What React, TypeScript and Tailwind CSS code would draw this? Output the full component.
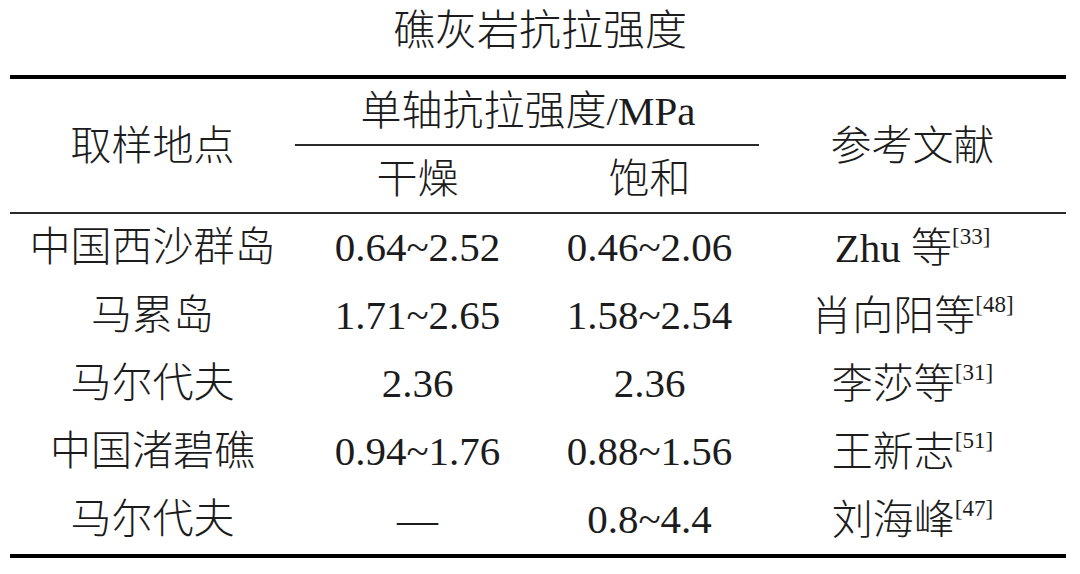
const rows = [
  { place: '中国西沙群岛', dry: '0.64~2.52', wet: '0.46~2.06', ref: 'Zhu 等', cite: '[33]' },
  { place: '马累岛', dry: '1.71~2.65', wet: '1.58~2.54', ref: '肖向阳等', cite: '[48]' },
  { place: '马尔代夫', dry: '2.36', wet: '2.36', ref: '李莎等', cite: '[31]' },
  { place: '中国渚碧礁', dry: '0.94~1.76', wet: '0.88~1.56', ref: '王新志', cite: '[51]' },
  { place: '马尔代夫', dry: '—', wet: '0.8~4.4', ref: '刘海峰', cite: '[47]' },
];

function Cite({ text, cite }: { text: string; cite: string }) {
  return (
    <span className="inline-flex items-start leading-none">
      <span>{text}</span>
      <span className="text-[23px] leading-none -mt-[3px]">{cite}</span>
    </span>
  );
}

export default function App() {
  return (
    <div
      className="w-[1080px] h-[574px] bg-white text-[#1c1c1c] overflow-hidden"
      style={{ fontFamily: '"Liberation Serif", "Noto Sans CJK SC", serif' }}
    >
      {/* Title */}
      <div className="h-[75px] flex justify-center pt-[9px] text-[42px] leading-[44px] font-light">
        礁灰岩抗拉强度
      </div>

      <div className="mx-[10px] w-[1056px]">
        <div className="h-[4px] bg-black" />

        {/* Header */}
        <div className="grid grid-cols-[285px_464px_307px] h-[133px] text-[41px] font-light">
          <div className="flex items-center justify-center pt-[2px]">取样地点</div>
          <div className="flex flex-col">
            <div className="h-[65px] flex items-center justify-center pl-[2px]">单轴抗拉强度/MPa</div>
            <div className="h-[2px] bg-[#2a2a2a]" />
            <div className="grid grid-cols-[245px_219px] flex-1">
              <div className="flex items-center justify-center pt-[2px]">干燥</div>
              <div className="flex items-center justify-center pt-[2px]">饱和</div>
            </div>
          </div>
          <div className="flex items-center justify-center pt-[2px]">参考文献</div>
        </div>

        <div className="h-[2px] bg-[#2a2a2a]" />

        {/* Body */}
        {rows.map((r, i) => (
          <div
            key={i}
            className="grid grid-cols-[285px_245px_219px_307px] h-[68px] text-[41px] font-light"
          >
            <div className="flex items-center justify-center">{r.place}</div>
            <div className="flex items-center justify-center">{r.dry}</div>
            <div className="flex items-center justify-center">{r.wet}</div>
            <div className="flex items-center justify-center">
              <Cite text={r.ref} cite={r.cite} />
            </div>
          </div>
        ))}

        <div className="h-[4px] bg-black" />
      </div>
    </div>
  );
}
